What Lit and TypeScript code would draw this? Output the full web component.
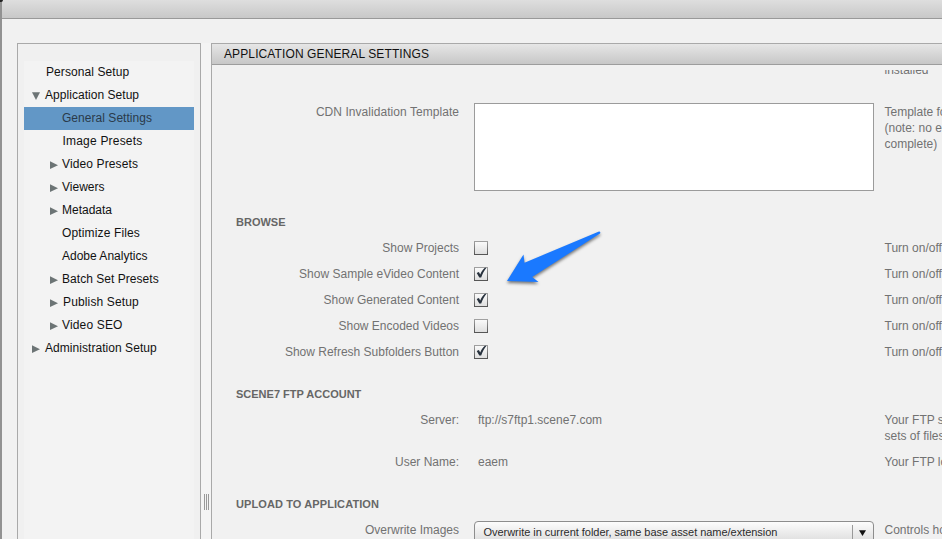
import { LitElement, html, svg, css, nothing } from "lit";
import { customElement, property } from "lit/decorators.js";
import { classMap } from "lit/directives/class-map.js";
import { styleMap } from "lit/directives/style-map.js";

type NavItem = { text: string; level: number; arrow?: "open" | "closed"; selected?: boolean; tracking?: number; indent?: number };

const NAV: NavItem[] = [
  { text: "Personal Setup", level: 1, indent: 1, tracking: 0.08 },
  { text: "Application Setup", level: 1, arrow: "open", tracking: 0.04 },
  { text: "General Settings", level: 2, selected: true, tracking: 0.04 },
  { text: "Image Presets", level: 2, indent: 0.5, tracking: 0.2 },
  { text: "Video Presets", level: 2, arrow: "closed", tracking: 0.12 },
  { text: "Viewers", level: 2, arrow: "closed" },
  { text: "Metadata", level: 2, arrow: "closed" },
  { text: "Optimize Files", level: 2, tracking: 0.14 },
  { text: "Adobe Analytics", level: 2 },
  { text: "Batch Set Presets", level: 2, arrow: "closed", tracking: 0.04 },
  { text: "Publish Setup", level: 2, arrow: "closed", indent: 1, tracking: 0.14 },
  { text: "Video SEO", level: 2, arrow: "closed", tracking: 0.16 },
  { text: "Administration Setup", level: 1, arrow: "closed", tracking: 0.05 },
];

const TOGGLES = [
  { text: "Show Projects", on: false },
  { text: "Show Sample eVideo Content", on: true },
  { text: "Show Generated Content", on: true },
  { text: "Show Encoded Videos", on: false },
  { text: "Show Refresh Subfolders Button", on: true },
];

@customElement("check-box")
class CheckBox extends LitElement {
  @property({ type: Boolean }) checked = false;
  static styles = css`
    :host { display: block; width: 14px; height: 14px; }
    svg { display: block; }
  `;
  render() {
    return html`<svg width="14" height="14" viewBox="0 0 14 14">
      <defs>
        <linearGradient id="f" x1="0" y1="0" x2="0" y2="1"><stop offset="0" stop-color="#fbfbfb"/><stop offset="1" stop-color="#dedede"/></linearGradient>
        <linearGradient id="s" x1="0" y1="0" x2="0" y2="1"><stop offset="0" stop-color="#a0a0a0"/><stop offset="1" stop-color="#565656"/></linearGradient>
      </defs>
      <rect x=".5" y=".5" width="13" height="13" fill="url(#f)" stroke="url(#s)"/>
      ${this.checked
        ? svg`<path d="M2.7 5.9L4.9 4.9L6.2 7.4C7.5 4.6 9.1 2.3 10.9 .8L12.5 .8C10.1 3.8 8.6 6.7 7.2 10.4L5.3 10.4Z" fill="#27313d"/>`
        : nothing}
    </svg>`;
  }
}

@customElement("nav-tree")
class NavTree extends LitElement {
  static styles = css`
    :host { display: block; box-sizing: border-box; width: 184px; border: 1px solid #a9a9a9; border-bottom: 0; padding: 17px 6px 0; background: #f0f0f0; }
    .list { height: 100%; background: #f3f3f3; }
    .item { display: flex; height: 23px; line-height: 22px; color: #111; white-space: nowrap; }
    .arrow { flex: none; width: 21px; height: 23px; }
    .level2 .arrow { width: 38px; }
    .arrow svg { display: block; width: 8px; height: 8px; margin: 8px 0 0 8px; fill: #6c7475; }
    .level2 .arrow svg { margin-left: 26px; }
    .selected { background: #6297c6; color: #2a3a4a; }
  `;
  render() {
    return html`<div class="list">${NAV.map(
      (n) => html`<div class=${classMap({ item: true, level2: n.level === 2, selected: !!n.selected })}>
        <span class="arrow">${n.arrow
          ? html`<svg viewBox="0 0 8 8"><path d=${n.arrow === "open" ? "M0 .3H8L4 8Z" : "M0 .3L8 4.2L0 8Z"}/></svg>`
          : nothing}</span><span style=${styleMap({ letterSpacing: `${n.tracking ?? 0}px`, marginLeft: `${n.indent ?? 0}px` })}>${n.text}</span>
      </div>`
    )}</div>`;
  }
}

@customElement("settings-panel")
class SettingsPanel extends LitElement {
  static styles = css`
    :host { display: flex; flex-direction: column; box-sizing: border-box; flex: 1; min-width: 0; border: 1px solid #a9a9a9; border-right: 0; border-bottom: 0; background: #f1f1f1; }
    .header { flex: none; height: 20px; line-height: 20px; padding-left: 12px; letter-spacing: 0.11px; border-bottom: 1px solid #9d9d9d; background: linear-gradient(#e6e6e6, #c7c7c7); color: #111; }
    .body { flex: 1; min-height: 0; overflow: hidden; margin-top: 5px; color: #727272; line-height: 16px; }
    .row { display: grid; grid-template-columns: 247px 400px 400px; column-gap: 15px; align-items: start; }
    .row.first { margin-top: -8px; height: 16px; }
    .desc { margin-left: -4.5px; white-space: pre; }
    .label { text-align: right; }
    .template { margin-top: 25px; }
    .template .label, .template .desc { padding-top: 1px; }
    .template .label { letter-spacing: 0.05px; }
    .area { box-sizing: border-box; height: 88px; border: 1px solid #9b9b9b; background: #fff; }
    h2 { margin: 0 0 0 24px; font-size: 11px; font-weight: bold; line-height: 16px; height: 16px; color: #666; }
    .browse { margin-top: 23px; }
    .toggles { display: grid; row-gap: 10px; margin-top: 10px; }
    .toggles .row { height: 16px; }
    check-box { margin-top: 1px; }
    .ftp { margin-top: 26px; }
    .server { margin-top: 10px; height: 42px; }
    .user { height: 16px; }
    .value { padding-left: 4px; }
    .upload { margin-top: 26px; letter-spacing: 0.1px; }
    .overwrite { margin-top: 10px; }
    .select { display: flex; box-sizing: border-box; height: 24px; margin-top: -1px; border: 1px solid #8d8d8d; border-radius: 4px; background: linear-gradient(#fcfcfc, #dadada); color: #2c2c2c; font-size: 11px; line-height: 20px; padding-left: 8.5px; }
    .select .text { flex: 1; letter-spacing: -0.035px; }
    .select .drop { width: 20px; margin-top: 3px; border-left: 1px solid #999; }
    .drop svg { display: block; margin: 5px 0 0 6px; fill: #111; }
  `;
  render() {
    return html`
      <div class="header">APPLICATION GENERAL SETTINGS</div>
      <div class="body">
        <div class="row first"><div></div><div></div><div class="desc">installed</div></div>
        <div class="row template">
          <div class="label">CDN Invalidation Template</div>
          <div class="area"></div>
          <div class="desc">${"Template for\n(note: no edit\ncomplete)"}</div>
        </div>
        <h2 class="browse">BROWSE</h2>
        <div class="toggles">${TOGGLES.map(
          (t) => html`<div class="row"><div class="label">${t.text}</div><check-box ?checked=${t.on}></check-box><div class="desc">Turn on/off</div></div>`
        )}</div>
        <h2 class="ftp">SCENE7 FTP ACCOUNT</h2>
        <div class="row server"><div class="label">Server:</div><div class="value">ftp://s7ftp1.scene7.com</div><div class="desc">${"Your FTP server\nsets of files"}</div></div>
        <div class="row user"><div class="label">User Name:</div><div class="value">eaem</div><div class="desc">Your FTP login</div></div>
        <h2 class="upload">UPLOAD TO APPLICATION</h2>
        <div class="row overwrite">
          <div class="label">Overwrite Images</div>
          <div class="select"><span class="text">Overwrite in current folder, same base asset name/extension</span><span class="drop"><svg width="7" height="6" viewBox="0 0 7 6"><path d="M0 .2H7L3.5 6Z"/></svg></span></div>
          <div class="desc">Controls how</div>
        </div>
      </div>`;
  }
}

@customElement("app-root")
class AppRoot extends LitElement {
  static styles = css`
    :host { display: block; position: relative; width: 942px; height: 539px; overflow: hidden; font: 12px "Liberation Sans", Arial, sans-serif; background: #f1f1f1; }
    .window { display: flex; flex-direction: column; box-sizing: border-box; height: 100%; border-left: 2px solid #929292; }
    .titlebar { flex: none; height: 18px; border-bottom: 1px solid #999; background: linear-gradient(#dedede, #c8c8c8); }
    .content { display: flex; flex: 1; min-height: 0; padding: 24px 0 0 15px; }
    .splitter { display: flex; flex: none; justify-content: center; gap: 1px; width: 10px; background: #f4f4f4; padding-top: 451px; box-sizing: border-box; }
    .splitter i { width: 1px; height: 16px; background: #999; }
    .corner { position: absolute; left: 0; top: 0; width: 3px; height: 2px; background: #222; border-bottom-right-radius: 2px; }
    .pointer { position: absolute; left: 500px; top: 224px; filter: drop-shadow(0 2px 1.5px rgba(0, 0, 0, .5)); }
  `;
  render() {
    return html`
      <div class="window">
        <div class="titlebar"></div>
        <div class="content">
          <nav-tree></nav-tree>
          <div class="splitter"><i></i><i></i><i></i></div>
          <settings-panel></settings-panel>
        </div>
      </div>
      <div class="corner"></div>
      <svg class="pointer" width="110" height="70" viewBox="0 0 110 70"><path d="M7 57L23.5 30.5L24.5 38.7L99 7.5Q101 7.5 100 9.5L32.2 53L38.5 58Z" fill="#1a79ff"/></svg>`;
  }
}
